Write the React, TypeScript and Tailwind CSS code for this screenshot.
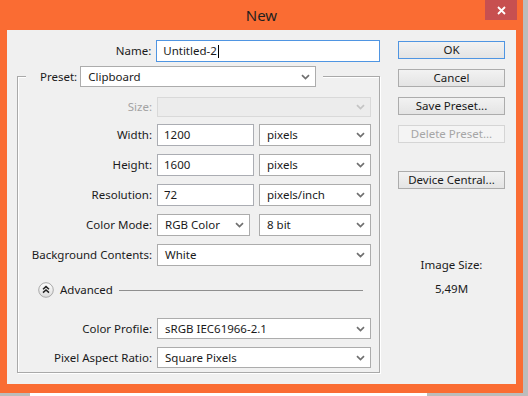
import type { ReactNode } from 'react';

const font = { fontFamily: '"Noto Sans", "Open Sans", Arial, sans-serif' };

const Chevron = ({ muted }: { muted?: boolean }) => (
  <svg width="9" height="6" viewBox="0 0 9 6" className="shrink-0">
    <path
      d="M1 1.2 L4.5 4.6 L8 1.2"
      fill="none"
      stroke={muted ? '#c4c4c4' : '#707070'}
      strokeWidth="1.7"
    />
  </svg>
);

const Dropdown = ({
  value,
  width,
  height = 'h-[22px]',
  disabled,
}: {
  value?: string;
  width: string;
  height?: string;
  disabled?: boolean;
}) => (
  <div
    className={`${width} ${height} flex shrink-0 items-center justify-between border pl-[7px] pr-[5px] ${
      disabled ? 'border-[#d9d9d9] bg-[#ececec]' : 'border-[#acacac] bg-white'
    }`}
  >
    <span className="whitespace-nowrap text-[11.5px] leading-[16px] text-[#1a1a1a]">{value}</span>
    <Chevron muted={disabled} />
  </div>
);

const Field = ({ value, width }: { value: string; width: string }) => (
  <div className={`${width} flex h-[22px] shrink-0 items-center border border-[#abadb3] bg-white pl-[6px]`}>
    <span className="text-[11.5px] leading-[16px] text-[#1a1a1a]">{value}</span>
  </div>
);

const Row = ({ label, children, muted }: { label: string; children: ReactNode; muted?: boolean }) => (
  <div className="flex items-center gap-[5px]">
    <span className={`w-[134px] text-right text-[11.5px] ${muted ? 'text-[#a3a3a3]' : 'text-[#1a1a1a]'}`}>
      {label}
    </span>
    {children}
  </div>
);

const Btn = ({
  children,
  primary,
  disabled,
  className = '',
}: {
  children: ReactNode;
  primary?: boolean;
  disabled?: boolean;
  className?: string;
}) => (
  <button
    type="button"
    className={`flex h-[18px] w-[107px] items-center justify-center border text-[11.5px] leading-[16px] ${
      disabled
        ? 'border-[#d5d5d5] bg-[#f4f4f4] text-[#a6a6a6]'
        : primary
          ? 'border-[#4f95e2] bg-gradient-to-b from-[#f2f2f2] to-[#e4e4e4] text-[#1a1a1a]'
          : 'border-[#acacac] bg-gradient-to-b from-[#f2f2f2] to-[#e4e4e4] text-[#1a1a1a]'
    } ${className}`}
  >
    {children}
  </button>
);

const AdvancedToggle = () => (
  <svg width="16" height="16" viewBox="0 0 16 16" className="shrink-0">
    <defs>
      <linearGradient id="adv" x1="0" y1="0" x2="0" y2="1">
        <stop offset="0" stopColor="#ffffff" />
        <stop offset="1" stopColor="#dcdcdc" />
      </linearGradient>
    </defs>
    <circle cx="8" cy="8" r="7.3" fill="url(#adv)" stroke="#a9a9a9" strokeWidth="1" />
    <path d="M5 7.2 L8 4.6 L11 7.2 M5 10.6 L8 8 L11 10.6" fill="none" stroke="#222" strokeWidth="1.5" />
  </svg>
);

export default function App() {
  return (
    <div className="flex h-[396px] w-[528px] flex-col overflow-hidden bg-[#bcbcbc]" style={font}>
      <div className="flex h-[393px] w-[523px] shrink-0 flex-col bg-[#fa6c33]">
        {/* title bar */}
        <div className="grid h-[30px] shrink-0 grid-cols-[1fr_auto_1fr]">
          <div />
          <span className="pt-[3px] text-[15px] leading-[24px] text-[#1f1f1f]">New</span>
          <div className="flex justify-end pr-[6px]">
            <div className="flex h-[20px] w-[32px] items-center justify-center bg-[#c75050]">
              <svg width="9" height="9" viewBox="0 0 9 9">
                <path d="M1 1 L8 8 M8 1 L1 8" stroke="#fff" strokeWidth="1.8" />
              </svg>
            </div>
          </div>
        </div>

        {/* dialog body */}
        <div className="mx-[7px] flex h-[354px] shrink-0 bg-[#f0f0f0]">
          <div className="flex w-[373px] shrink-0 flex-col pl-[10px] pt-[10px]">
            <div className="flex items-center gap-[5px]">
              <span className="w-[135px] text-right text-[11.5px] text-[#1a1a1a]">Name:</span>
              <div className="flex h-[22px] w-[225px] items-center border border-[#4f95e2] bg-white pl-[6px]">
                <span className="text-[11.5px] leading-[16px] text-[#1a1a1a]">Untitled-2</span>
                <span className="ml-px h-[13px] w-px bg-black" />
              </div>
            </div>

            <fieldset className="mt-[4px] w-[363px] border border-[#a9a9a9] pb-[4px] shadow-[inset_1px_1px_0_#ffffff,1px_1px_0_#ffffff]">
              <legend className="ml-[8px] flex items-center bg-[#f0f0f0] pl-[14px] pr-[7px]">
                <span className="text-[11.5px] text-[#1a1a1a]">Preset:</span>
                <div className="ml-[3px]">
                  <Dropdown value="Clipboard" width="w-[236px]" height="h-[21px]" />
                </div>
              </legend>

              <div className="flex flex-col pt-[10px]">
                <Row label="Size:" muted>
                  <Dropdown width="w-[214px]" height="h-[20px]" disabled />
                </Row>
                <div className="mt-[7px]">
                  <Row label="Width:">
                    <Field value="1200" width="w-[97px]" />
                    <Dropdown value="pixels" width="w-[112px]" />
                  </Row>
                </div>
                <div className="mt-[8px]">
                  <Row label="Height:">
                    <Field value="1600" width="w-[97px]" />
                    <Dropdown value="pixels" width="w-[112px]" />
                  </Row>
                </div>
                <div className="mt-[8px]">
                  <Row label="Resolution:">
                    <Field value="72" width="w-[97px]" />
                    <Dropdown value="pixels/inch" width="w-[112px]" />
                  </Row>
                </div>
                <div className="mt-[8px]">
                  <Row label="Color Mode:">
                    <Dropdown value="RGB Color" width="w-[93px]" />
                    <div className="ml-[4px]">
                      <Dropdown value="8 bit" width="w-[112px]" />
                    </div>
                  </Row>
                </div>
                <div className="mt-[8px]">
                  <Row label="Background Contents:">
                    <Dropdown value="White" width="w-[214px]" />
                  </Row>
                </div>

                <div className="ml-[20px] mr-[16px] mt-[16px] flex h-[16px] items-center">
                  <AdvancedToggle />
                  <span className="ml-[6px] text-[11.5px] text-[#1a1a1a]">Advanced</span>
                  <span className="ml-[6px] h-px flex-1 bg-[#8f8f8f]" />
                </div>

                <div className="mt-[20px]">
                  <Row label="Color Profile:">
                    <Dropdown value="sRGB IEC61966-2.1" width="w-[214px]" height="h-[21px]" />
                  </Row>
                </div>
                <div className="mt-[8px]">
                  <Row label="Pixel Aspect Ratio:">
                    <Dropdown value="Square Pixels" width="w-[214px]" height="h-[21px]" />
                  </Row>
                </div>
              </div>
            </fieldset>
          </div>

          <div className="ml-[18px] flex w-[107px] shrink-0 flex-col pt-[11px]">
            <Btn primary>OK</Btn>
            <Btn className="mt-[10px]">Cancel</Btn>
            <Btn className="mt-[10px]">Save Preset...</Btn>
            <Btn className="mt-[10px]" disabled>
              Delete Preset...
            </Btn>
            <Btn className="mt-[28px]">Device Central...</Btn>
            <span className="mt-[68px] text-center text-[11.5px] leading-[16px] text-[#1a1a1a]">Image Size:</span>
            <span className="mt-[8px] text-center text-[11.5px] leading-[16px] text-[#1a1a1a]">5,49M</span>
          </div>
        </div>
      </div>
      <div className="ml-[30px] h-[3px] w-[397px] bg-white" />
    </div>
  );
}
